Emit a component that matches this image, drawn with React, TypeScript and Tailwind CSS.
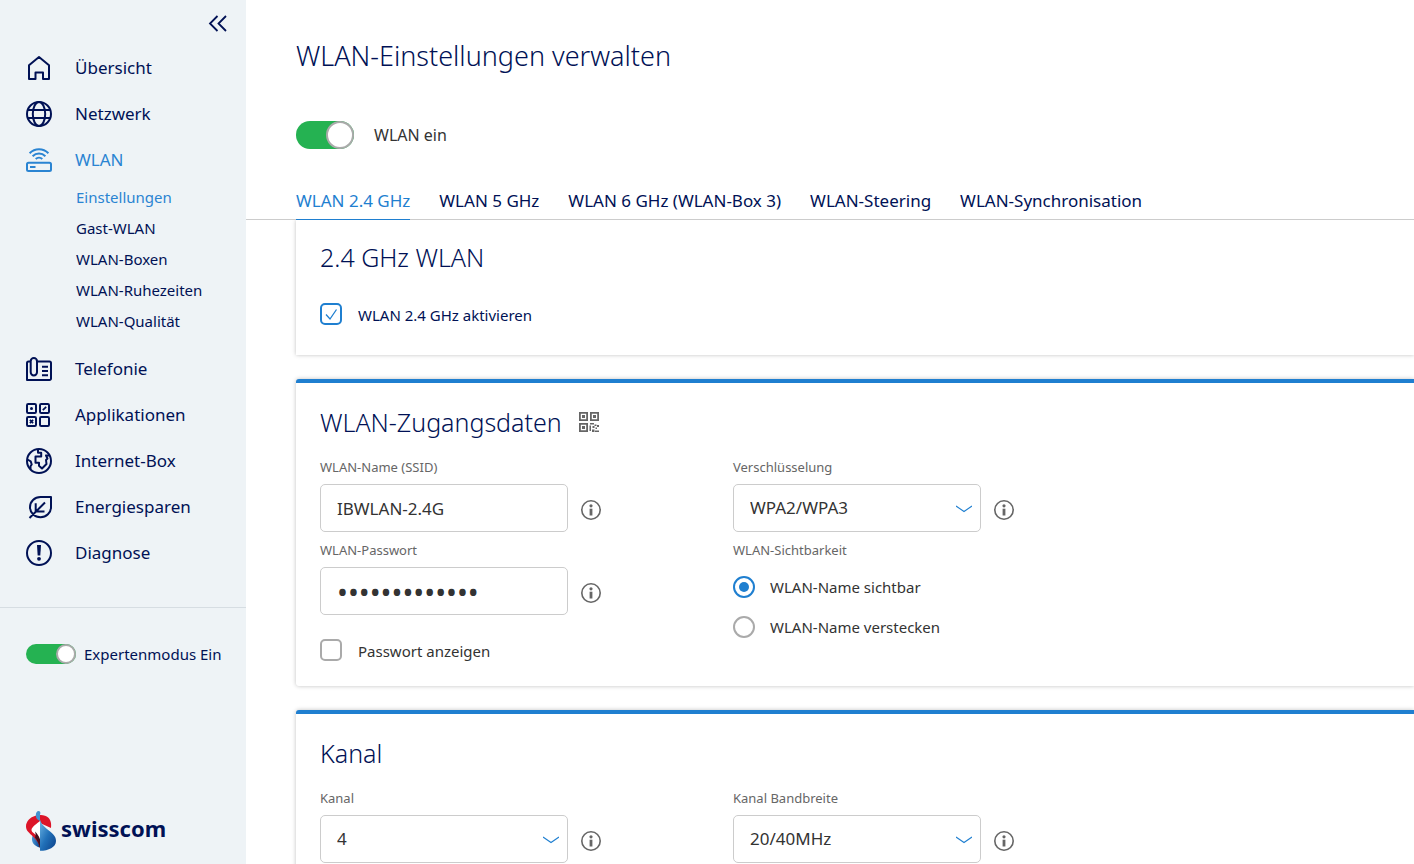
import React, { useId, useState } from 'react';

type IconProps = { children: React.ReactNode };

const MenuIcon: React.FC<IconProps> = ({ children }) => (
  <svg viewBox="0 0 28 28" className="size-7 shrink-0" fill="none" stroke="currentColor" strokeWidth="2" strokeLinejoin="round" aria-hidden="true">
    {children}
  </svg>
);

const HomeIcon = () => (
  <MenuIcon>
    <path d="M4 25V11.2L14 3l10 8.200V25h-6v-6.500h-7.500V25z" />
  </MenuIcon>
);

const GlobeIcon = () => (
  <MenuIcon>
    <circle cx="14" cy="14" r="12" />
    <ellipse cx="14" cy="14" rx="6.200" ry="12" />
    <path d="M2.700 10h22.600M2.700 18h22.600" />
  </MenuIcon>
);

const RouterIcon = () => (
  <MenuIcon>
    <rect x="2" y="16.800" width="24" height="8.300" rx="1.500" />
    <path d="M5 21h5.500M4.600 7.200C9.900 1.800 18.100 1.800 23.400 7.200M7.600 10.200c3.600-3.600 9.200-3.600 12.800 0M10.700 13c1.900-1.800 4.700-1.800 6.600 0" />
  </MenuIcon>
);

const PhoneIcon = () => (
  <MenuIcon>
    <rect x="5.700" y="3" width="6.300" height="17.500" rx="3.150" />
    <path d="M5.700 6.500H3.500A1.500 1.500 0 0 0 2 8v17h22.500a1.500 1.500 0 0 0 1.500-1.500V8a1.500 1.500 0 0 0-1.500-1.500H12M17 11.700h6M17 16h6M17 20.200h6" />
  </MenuIcon>
);

const AppsIcon = () => (
  <MenuIcon>
    <rect x="2" y="3" width="9" height="9" rx="1.200" />
    <rect x="15" y="3" width="9" height="9" rx="1.200" />
    <rect x="2" y="16" width="9" height="9" rx="1.200" />
    <rect x="15" y="16" width="9" height="9" rx="1.200" />
    <circle cx="6.500" cy="7.500" r="1.500" fill="currentColor" stroke="none" />
    <path d="M17.800 9.200l3.400-3.400M4.900 18.900l3.200 3.200M8.100 18.900l-3.200 3.200" strokeWidth="1.700" />
  </MenuIcon>
);

const EarthIcon = () => (
  <MenuIcon>
    <circle cx="14" cy="14" r="12" />
    <path d="M13 2v3.800h3.200V9.500H10.500v6.200H14v3l3 2.800 4.500-4.500-.5-4 1.500-1.500-1.500-3h3.200M2.500 12.500l3.200 1.800 1 3.200-1.200 1.800V22" />
  </MenuIcon>
);

const LeafIcon = () => (
  <MenuIcon>
    <path d="M26 4H15.500C9.500 4 5 8.500 5 14.200c0 5.600 4.700 10 10.500 10S26 19.800 26 14.200zM4.500 25L20 9.500M10.700 10.200v8.300h8.800" />
  </MenuIcon>
);

const AlertIcon = () => (
  <MenuIcon>
    <circle cx="14" cy="14" r="12" />
    <path d="M12 6h4l-.7 10.500h-2.600z" fill="currentColor" stroke="none" />
    <circle cx="14" cy="19.800" r="1.900" fill="currentColor" stroke="none" />
  </MenuIcon>
);

const QrIcon = () => (
  <svg viewBox="0 0 20 20" className="size-5" fill="none" stroke="currentColor" strokeWidth="1.800" aria-hidden="true">
    <path d="M.9.900h7.200v7.200H.9zM11.900.900h7.200v7.200h-7.200zM.9 11.900h7.200v7.200H.9z" />
    <path d="M3 3h3v3H3zM14 3h3v3h-3zM3 14h3v3H3zM11 11h4v1.500h-4zM15.500 12.500h2V14h-2zM18 13h2v2h-2zM10.500 13.500H12V19h-1.500zM13.500 14h2v2h-2zM16.500 15.500H18V17h-1.500zM13 17.500h2.500V20H13zM16 18.500h4V20h-4z" fill="currentColor" stroke="none" />
  </svg>
);

const Logo = () => (
  <div className="flex items-start gap-[3px] text-[#001155]">
    <svg viewBox="0 0 32 40" className="h-10 w-8" aria-hidden="true">
      <defs>
        <linearGradient id="wing" x1="0" y1="0" x2="1" y2="1">
          <stop offset="0" stopColor="#6cb4e4" />
          <stop offset=".5" stopColor="#2170b8" />
          <stop offset="1" stopColor="#0a3f88" />
        </linearGradient>
        <linearGradient id="tail" x1="0" y1="0" x2="1" y2="0">
          <stop offset="0" stopColor="#4c98d6" />
          <stop offset=".7" stopColor="#1c5ca5" />
          <stop offset="1" stopColor="#143a70" />
        </linearGradient>
      </defs>
      <path d="M7 24c-2 3.500-1 8 2 10.300 1.500 1.200 3.300 1.900 5 2.200V25z" fill="url(#tail)" />
      <path d="M9.500 4.800C4 6.300 0 10.500 0 15.500 0 20 3.500 22 6.500 25c3.500 3.500 5.700 6 7.500 11V12l11 5c.8-6-1-10.500-6-12.300-3.300-1.200-6.500-.7-9.500.1z" fill="#dc1428" />
      <path d="M14 10c-3 2.500-8.500 6-8.500 9 0 2.700 5 4.200 8.500 9.500z" fill="#fff" />
      <path d="M9 20.500c2 2 4 4.500 5 8V37c-1-4-2.500-7-5-10.500.8-2 .8-4 0-6z" fill="#45101d" />
      <path d="M9.800 4.500C9.800 1.500 11 0 12.500 0S15 1 14 4v6c-2.500-1-4.200-2.800-4.200-5.500z" fill="#4292d0" />
      <path d="M14 8.500c1 4.500 4.500 7.500 8.500 10.800C27 22.700 30 25.500 30 30c0 6.300-7.500 9.800-16 9.800z" fill="url(#wing)" />
    </svg>
    <span className="text-[22px] leading-[34px] font-bold">swisscom</span>
  </div>
);

const InfoButton = ({ about }: { about: string }) => (
  <button type="button" aria-label={about} className="mt-1 text-[#666666]">
    <svg viewBox="0 0 20 20" className="size-5" fill="none" stroke="currentColor" strokeWidth="1.600" aria-hidden="true">
      <circle cx="10" cy="10" r="9.200" />
      <circle cx="10" cy="5.800" r="1.600" fill="currentColor" stroke="none" />
      <path d="M10 8.700v6.800" strokeWidth="2.800" />
    </svg>
  </button>
);

const MENU = [
  { label: 'Übersicht', icon: HomeIcon },
  { label: 'Netzwerk', icon: GlobeIcon },
  { label: 'WLAN', icon: RouterIcon, items: ['Einstellungen', 'Gast-WLAN', 'WLAN-Boxen', 'WLAN-Ruhezeiten', 'WLAN-Qualität'] },
  { label: 'Telefonie', icon: PhoneIcon },
  { label: 'Applikationen', icon: AppsIcon },
  { label: 'Internet-Box', icon: EarthIcon },
  { label: 'Energiesparen', icon: LeafIcon },
  { label: 'Diagnose', icon: AlertIcon },
];

const TABS = ['WLAN 2.4 GHz', 'WLAN 5 GHz', 'WLAN 6 GHz (WLAN-Box 3)', 'WLAN-Steering', 'WLAN-Synchronisation'];

const Sidebar = () => {
  const [expert, setExpert] = useState(true);

  return (
    <aside className="flex w-[246px] shrink-0 flex-col bg-[#eef3f6] text-[#001155]">
      <div className="flex h-[45px] items-center justify-end pr-[18px]">
        <button type="button" aria-label="Menü einklappen">
          <svg viewBox="0 0 20 20" className="size-5" fill="none" stroke="currentColor" strokeWidth="1.800" aria-hidden="true">
            <path d="M9.500 3L2 10.500 9.500 18M18 3l-7.500 7.500L18 18" />
          </svg>
        </button>
      </div>
      <nav>
        <ul>
          {MENU.map(({ label, icon: Icon, items }) => (
            <li key={label}>
              <a href="#" className={`flex h-[46px] items-center gap-[22px] pl-[25px] text-[17px] ${items ? 'text-[#2a84d2]' : ''}`}>
                <Icon />
                {label}
              </a>
              {items && (
                <ul className="pb-2 pl-[76px] text-[15px]">
                  {items.map((item, i) => (
                    <li key={item}>
                      <a href="#" className={`block h-[31px] leading-7 ${i === 0 ? 'text-[#2a84d2]' : ''}`}>{item}</a>
                    </li>
                  ))}
                </ul>
              )}
            </li>
          ))}
        </ul>
      </nav>
      <hr className="mt-[31px] border-[#d6dde2]" />
      <label className="mt-[35px] flex items-center gap-2 pl-[26px] text-[15px]">
        <input
          type="checkbox"
          role="switch"
          checked={expert}
          onChange={(e) => setExpert(e.target.checked)}
          className="h-5 w-[50px] shrink-0 appearance-none rounded-full bg-gray-300 before:block before:size-5 before:rounded-full before:border-2 before:border-[#aaaaaa] before:bg-white checked:bg-[#25b252] checked:before:translate-x-[30px]"
        />
        Expertenmodus Ein
      </label>
      <div className="mt-auto pb-[13px] pl-[26px]">
        <Logo />
      </div>
    </aside>
  );
};

const Checkbox = ({ label, checked, onChange, className }: { label: string; checked: boolean; onChange: (value: boolean) => void; className: string }) => (
  <label className={`flex h-6 items-start gap-4 text-[15px] leading-6 ${className}`}>
    <span className="relative size-[22px]">
      <input
        type="checkbox"
        checked={checked}
        onChange={(e) => onChange(e.target.checked)}
        className="peer block size-[22px] appearance-none rounded-[5px] border-2 border-[#aaaaaa] bg-white checked:border-[#1f7fd0]"
      />
      <svg viewBox="0 0 22 22" className="pointer-events-none absolute inset-0 hidden text-[#1f7fd0] peer-checked:block" fill="none" stroke="currentColor" strokeWidth="1.300" aria-hidden="true">
        <path d="M6 11.500l4 4.500 6.500-9.500" />
      </svg>
    </span>
    {label}
  </label>
);

const Radio = ({ label, checked, onChange }: { label: string; checked: boolean; onChange: () => void }) => (
  <label className="flex h-10 items-center gap-[15px] text-[15px]">
    <input
      type="radio"
      name="visibility"
      checked={checked}
      onChange={onChange}
      className="grid size-[22px] appearance-none place-items-center rounded-full border-2 border-[#aaaaaa] bg-white checked:border-[#1f7fd0] checked:before:size-[10px] checked:before:rounded-full checked:before:bg-[#1f7fd0]"
    />
    {label}
  </label>
);

const fieldClass = 'h-12 w-[248px] appearance-none rounded-[5px] border border-[#cccccc] bg-white px-4 text-[#333333]';

const TextField = ({ label, type = 'text', initial }: { label: string; type?: string; initial: string }) => {
  const id = useId();
  const [value, setValue] = useState(initial);

  return (
    <div className="mb-2">
      <label htmlFor={id} className="mb-[7px] block text-[13px] leading-5 text-[#666666]">{label}</label>
      <div className="flex items-center gap-[13px]">
        <input
          id={id}
          type={type}
          value={value}
          onChange={(e) => setValue(e.target.value)}
          className={`${fieldClass} ${type === 'password' ? 'text-[29px]' : 'text-[17px]'}`}
        />
        <InfoButton about={`Info zu ${label}`} />
      </div>
    </div>
  );
};

const SelectField = ({ label, options }: { label: string; options: string[] }) => {
  const id = useId();

  return (
    <div className="mb-2">
      <label htmlFor={id} className="mb-[7px] block text-[13px] leading-5 text-[#666666]">{label}</label>
      <div className="flex items-center gap-[13px]">
        <div className="relative">
          <select id={id} className={`${fieldClass} text-[17px]`}>
            {options.map(option => <option key={option}>{option}</option>)}
          </select>
          <svg viewBox="0 0 16 8" className="pointer-events-none absolute top-[21px] right-[9px] h-2 w-4 text-[#1f7fd0]" fill="none" stroke="currentColor" strokeWidth="1.100" aria-hidden="true">
            <path d="M0 1L8 6.500 16 1" />
          </svg>
        </div>
        <InfoButton about={`Info zu ${label}`} />
      </div>
    </div>
  );
};

const cardClass = 'rounded-l-[3px] border-t-4 border-[#1f7fd0] bg-white pt-[21px] pl-6 shadow-[0_0_4px_rgba(0,0,0,0.25)]';
const headingClass = 'text-[25px] leading-9 font-light text-[#001155]';
const columnsClass = 'mt-[17px] grid grid-cols-[minmax(290px,413px)_1fr]';

const App: React.FC = () => {
  const [wlanOn, setWlanOn] = useState(true);
  const [activeTab, setActiveTab] = useState(TABS[0]);
  const [bandOn, setBandOn] = useState(true);
  const [showPassword, setShowPassword] = useState(false);
  const [visible, setVisible] = useState(true);

  return (
    <div className="flex h-screen overflow-hidden bg-white font-['Noto_Sans','Open_Sans',sans-serif] text-[#333333]">
      <Sidebar />
      <main className="flex min-w-0 flex-1 flex-col">
        <div className="pt-9 pl-[50px]">
          <h1 className="text-[27px] leading-10 font-light text-[#001155]">WLAN-Einstellungen verwalten</h1>
          <label className="mt-[45px] flex items-center gap-5 text-base leading-7">
            <input
              type="checkbox"
              role="switch"
              checked={wlanOn}
              onChange={(e) => setWlanOn(e.target.checked)}
              className="h-7 w-[58px] appearance-none rounded-full bg-gray-300 before:block before:size-7 before:rounded-full before:border-2 before:border-[#aaaaaa] before:bg-white checked:bg-[#25b252] checked:before:translate-x-[30px]"
            />
            WLAN ein
          </label>
        </div>

        <div role="tablist" className="mt-[38px] flex gap-[29px] border-b border-[#cccccc] pl-[50px]">
          {TABS.map(tab => (
            <button
              key={tab}
              type="button"
              role="tab"
              aria-selected={tab === activeTab}
              onClick={() => setActiveTab(tab)}
              className={`-mb-px h-[33px] border-b pb-1 text-[17px] whitespace-nowrap ${tab === activeTab ? 'border-[#1f7fd0] text-[#1f7fd0]' : 'border-transparent text-[#001155]'}`}
            >
              {tab}
            </button>
          ))}
        </div>

        <div className="min-h-0 flex-1 space-y-6 overflow-y-auto pl-[50px] [scrollbar-width:none]">
          <section className="bg-white pt-[19px] pb-7 pl-6 text-[#001155] shadow-[0_0_4px_rgba(0,0,0,0.25)]">
            <h2 className={headingClass}>2.4 GHz WLAN</h2>
            <Checkbox label="WLAN 2.4 GHz aktivieren" checked={bandOn} onChange={setBandOn} className="mt-7" />
          </section>

          <section className={cardClass}>
            <div className="flex items-center gap-[17px]">
              <h2 className={headingClass}>WLAN-Zugangsdaten</h2>
              <button type="button" aria-label="QR-Code anzeigen" className="text-[#666666]">
                <QrIcon />
              </button>
            </div>
            <div className={columnsClass}>
              <div className="pb-[23px]">
                <TextField label="WLAN-Name (SSID)" initial="IBWLAN-2.4G" />
                <TextField label="WLAN-Passwort" type={showPassword ? 'text' : 'password'} initial="internet-box1" />
                <Checkbox label="Passwort anzeigen" checked={showPassword} onChange={setShowPassword} className="mt-6" />
              </div>
              <div>
                <SelectField label="Verschlüsselung" options={['WPA2/WPA3', 'WPA2', 'WPA3']} />
                <fieldset>
                  <legend className="mb-[7px] text-[13px] leading-5 text-[#666666]">WLAN-Sichtbarkeit</legend>
                  <Radio label="WLAN-Name sichtbar" checked={visible} onChange={() => setVisible(true)} />
                  <Radio label="WLAN-Name verstecken" checked={!visible} onChange={() => setVisible(false)} />
                </fieldset>
              </div>
            </div>
          </section>

          <section className={cardClass}>
            <h2 className={headingClass}>Kanal</h2>
            <div className={columnsClass}>
              <SelectField label="Kanal" options={['4', '1', '6', '11']} />
              <SelectField label="Kanal Bandbreite" options={['20/40MHz', '20MHz']} />
            </div>
          </section>
        </div>
      </main>
    </div>
  );
};

export default App;
